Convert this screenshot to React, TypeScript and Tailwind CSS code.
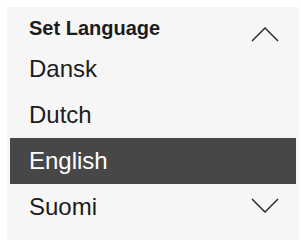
import React from 'react';

const languages = ['Dansk', 'Dutch', 'English', 'Suomi'];

function Chevron({ up }: { up?: boolean }) {
  return (
    <svg width="28" height="16" viewBox="0 0 28 16" className="shrink-0">
      <path
        d={up ? 'M1 15 L14 2 L27 15' : 'M1 1 L14 14 L27 1'}
        fill="none"
        stroke="#1f1f1f"
        strokeWidth="1.4"
      />
    </svg>
  );
}

export default function App() {
  const selected = 'English';

  return (
    <div className="w-[301px] h-[242px] bg-white pt-[7px] pl-[7px] font-['Liberation_Sans',Arial,sans-serif]">
      <div className="w-[292px] h-[233px] bg-[#f6f6f6] px-[3px]">
        {/* Header */}
        <div className="h-[39px] flex items-center justify-between pl-[19px] pr-[17px]">
          <span className="text-[20px] leading-[24px] font-bold text-[#1c1c1c] pt-[3px]">Set Language</span>
          <div className="mt-[14px]">
            <Chevron up />
          </div>
        </div>

        {/* Options */}
        <div className="flex flex-col">
          {languages.map((lang, i) => (
            <div
              key={lang}
              className={
                lang === selected
                  ? 'h-[46px] flex items-center justify-between pl-[19px] pr-[17px] bg-[#474747] text-white'
                  : 'h-[46px] flex items-center justify-between pl-[19px] pr-[17px] text-[#1c1c1c]'
              }
            >
              <span className="text-[24px] leading-[46px]">{lang}</span>
              {i === languages.length - 1 && (
                <div className="mt-[-3px]">
                  <Chevron />
                </div>
              )}
            </div>
          ))}
        </div>
      </div>
    </div>
  );
}
